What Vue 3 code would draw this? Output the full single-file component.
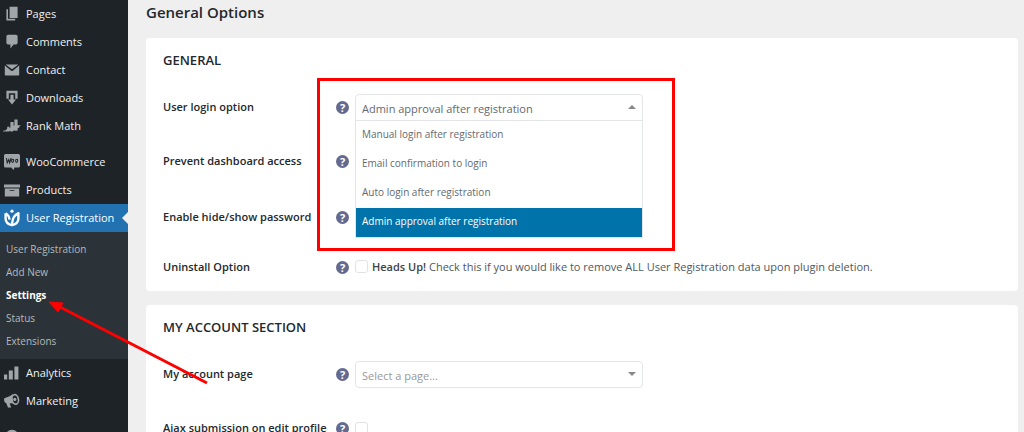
<script setup>
import { ref } from 'vue'

const topItems = [
  { label: 'Pages', icon: 'pages' },
  { label: 'Comments', icon: 'comments' },
  { label: 'Contact', icon: 'contact' },
  { label: 'Downloads', icon: 'downloads' },
  { label: 'Rank Math', icon: 'rank' },
  { label: 'WooCommerce', icon: 'woo', gap: true },
  { label: 'Products', icon: 'products' },
  { label: 'User Registration', icon: 'user', current: true }
]
const subItems = ['User Registration', 'Add New', 'Settings', 'Status', 'Extensions']
const bottomItems = [
  { label: 'Analytics', icon: 'analytics' },
  { label: 'Marketing', icon: 'marketing' },
  { label: '', icon: 'more', gap: true }
]
const icons = {
  pages: 'M7 15V1h10v14zM5 16h9v2H3V4h2z',
  comments: 'M5 1h10q2 0 2 2v8q0 2-2 2h-3l-4 5v-5H5q-2 0-2-2V3q0-2 2-2z',
  contact: 'M1 4.500L9 11q1 .8 2 0l8-6.500V16q0 1-1 1H2q-1 0-1-1zM2 3h16l-8 6z',
  downloads: 'M3 1h14v10h-3V4H6v7H3zM8 6h4v6h3l-5 6-5-6h3z',
  rank: 'M-1 16q4 0 5-3v-2h3v2l1-1V5h4v5l1-1V2h4v7h4q-2 1-2 3l-2 1v3h-4v-1l-2 2H8v-1l-2 1H-1z',
  products: 'M0 3h20v4H0zM1 8h18v10H1zM7 10v1h6v-1z',
  analytics: 'M0 12h4v6H0zm6-5h5v11H6zm7-5h5v16h-5z',
  more: 'M10 1a9 9 0 110 18 9 9 0 010-18z'
}
const loginOptions = [
  'Manual login after registration',
  'Email confirmation to login',
  'Auto login after registration',
  'Admin approval after registration'
]
const login = ref('Admin approval after registration')
const accountPage = ref('')
</script>

<template>
  <div class="shell">
    <nav class="sidebar" aria-label="Admin menu">
      <template v-for="group in [topItems, bottomItems]" :key="group[0].label">
        <a
          v-for="item in group"
          :key="item.icon"
          href="#"
          class="item"
          :class="{ current: item.current, spaced: item.gap }"
        >
          <svg class="icon" viewBox="0 0 20 20" aria-hidden="true">
            <g v-if="item.icon === 'woo'">
              <path d="M2 0h16q2 0 2 2v13q0 2-2 2h-5l-1 3-3-3H2q-2 0-2-2V2q0-2 2-2z" />
              <path class="ink" d="M3 5l1 6 2-4 1 4 2-6M11 6.500q-1.500 0-1.500 2t1.200 2 1.400-2-1.100-2zm5 0q-1.500 0-1.500 2t1.200 2 1.400-2-1.100-2z" />
            </g>
            <g v-else-if="item.icon === 'marketing'">
              <path d="M0 8q0-2 2-2 6-1 9-5-2 7 2 13-3-2-6-1l2 5H5l-2-5Q0 12 0 8z" />
              <ellipse class="ring" cx="14" cy="8" rx="4" ry="6" transform="rotate(-12 14 8)" />
              <circle cx="13.500" cy="8" r="2" />
            </g>
            <g v-else-if="item.icon === 'user'">
              <circle cx="10" cy="1.500" r="2" />
              <path class="leaf" d="M2 4v7q0 6 8 8 8-2 8-8V4q-7 3-8 13M2 4q4 2 5 8" />
            </g>
            <path v-else fill-rule="evenodd" :d="icons[item.icon]" />
          </svg>
          <span>{{ item.label }}</span>
        </a>
        <div v-if="group === topItems" class="submenu">
          <a v-for="sub in subItems" :key="sub" href="#" :class="{ active: sub === 'Settings' }">{{ sub }}</a>
        </div>
      </template>
    </nav>

    <main class="content">
      <h1>General Options</h1>

      <section class="card">
        <h2>GENERAL</h2>
        <div class="row">
          <label for="login">User login option</label>
          <button type="button" class="help" aria-label="Help: login option">?</button>
          <div class="picker open">
            <select id="login" v-model="login">
              <option v-for="o in loginOptions" :key="o">{{ o }}</option>
            </select>
            <ul class="menu">
              <li v-for="o in loginOptions" :key="o">
                <button type="button" :class="{ chosen: o === login }" @click="login = o">{{ o }}</button>
              </li>
            </ul>
          </div>
        </div>
        <div class="row tall">
          <label for="prevent">Prevent dashboard access</label>
          <button type="button" class="help" aria-label="Help: dashboard access">?</button>
          <input id="prevent" type="checkbox" />
        </div>
        <div class="row tall">
          <label for="hide">Enable hide/show password</label>
          <button type="button" class="help" aria-label="Help: password visibility">?</button>
          <input id="hide" type="checkbox" />
        </div>
        <div class="row short">
          <label for="uninstall">Uninstall Option</label>
          <button type="button" class="help" aria-label="Help: uninstall">?</button>
          <div class="check">
            <input id="uninstall" type="checkbox" />
            <span><strong>Heads Up!</strong> Check this if you would like to remove ALL User Registration data upon plugin deletion.</span>
          </div>
        </div>
      </section>

      <section class="card">
        <h2>MY ACCOUNT SECTION</h2>
        <div class="row">
          <label for="page">My account page</label>
          <button type="button" class="help" aria-label="Help: account page">?</button>
          <div class="picker">
            <select id="page" v-model="accountPage" class="empty">
              <option value="">Select a page...</option>
            </select>
          </div>
        </div>
        <div class="row tall">
          <label for="ajax">Ajax submission on edit profile</label>
          <button type="button" class="help" aria-label="Help: ajax submission">?</button>
          <input id="ajax" type="checkbox" />
        </div>
      </section>
    </main>

    <svg class="marks" width="680" height="400" aria-hidden="true">
      <rect x="318.500" y="79.500" width="355" height="170" />
      <path d="M207 383L60 307" />
      <path class="head" d="M49 302l14 1-5 9z" />
    </svg>
  </div>
</template>

<style>
body {
  margin: 0;
  background: #efefef;
}
</style>

<style scoped>
.shell {
  position: relative;
  display: flex;
  height: 100vh;
  overflow: hidden;
  font-family: "Open Sans", "Noto Sans", sans-serif;
  font-size: 11px;
  color: #23282d;
}
.shell * {
  box-sizing: border-box;
}
.sidebar {
  display: flex;
  flex-direction: column;
  flex: 0 0 128px;
  background: #1d2327;
}
.item {
  position: relative;
  display: flex;
  flex: 0 0 28px;
  align-items: center;
  gap: 6px;
  padding-left: 4px;
  color: #f0f0f1;
  text-decoration: none;
  white-space: nowrap;
}
.item span {
  padding-bottom: 2px;
}
.spaced {
  margin-top: 8px;
}
.icon {
  flex: none;
  width: 16px;
  height: 16px;
  overflow: visible;
  fill: #a0a5aa;
}
.ink {
  fill: none;
  stroke: #1d2327;
  stroke-width: 1.3;
}
.ring {
  fill: none;
  stroke: #a0a5aa;
  stroke-width: 2;
}
.leaf {
  fill: none;
  stroke: #fff;
  stroke-width: 3;
  stroke-linejoin: round;
}
.current {
  background: #2271b1;
  color: #fff;
}
.current .icon {
  fill: #fff;
}
.current::after {
  content: "";
  position: absolute;
  right: 0;
  top: 8px;
  border: 6px solid transparent;
  border-left: 0;
  border-right-color: #efefef;
}
.submenu {
  flex: none;
  padding: 6px 0;
  background: #2c3338;
}
.submenu a {
  display: block;
  padding-left: 6px;
  font-size: 10px;
  line-height: 23px;
  color: #b4b9be;
  text-decoration: none;
}
.submenu .active {
  color: #fff;
  font-weight: 700;
}
.content {
  flex: 1;
  min-width: 0;
  padding: 0 6px 0 18px;
}
h1 {
  margin: 0;
  height: 38px;
  line-height: 24px;
  font-size: 15px;
  font-weight: 600;
}
.card {
  margin-bottom: 14px;
  padding: 0 17px 2px;
  background: #fff;
  border-radius: 4px;
}
h2 {
  margin: 0;
  height: 43px;
  line-height: 44px;
  font-size: 13px;
  font-weight: 600;
}
.row {
  display: grid;
  grid-template-columns: 167px 13px 1fr;
  column-gap: 6px;
  align-items: center;
  height: 52px;
}
.row.tall {
  height: 56px;
}
.row.short {
  height: 44px;
}
label {
  padding-bottom: 2px;
  font-weight: 600;
  white-space: nowrap;
}
.help {
  width: 13px;
  height: 13px;
  padding: 0;
  border: 0;
  border-radius: 50%;
  background: #646a8f;
  color: #fff;
  font: 700 11px/13px "Open Sans", sans-serif;
}
input[type="checkbox"] {
  appearance: none;
  flex: none;
  width: 13px;
  height: 13px;
  margin: 0;
  border: 1px solid #e1e1e6;
  border-radius: 3px;
  background: #fff;
}
.check {
  display: flex;
  align-items: center;
  gap: 4px;
  padding-bottom: 2px;
  color: #50575e;
  white-space: nowrap;
}
strong {
  font-weight: 600;
  color: #3c434a;
}
.picker {
  position: relative;
  width: 288px;
}
.picker::after {
  content: "";
  position: absolute;
  right: 7px;
  top: 11px;
  border: 4px solid transparent;
  border-top-color: #888;
  border-bottom: 0;
}
.picker.open::after {
  border-top: 0;
  border-bottom: 4px solid #888;
}
select {
  appearance: none;
  display: block;
  width: 100%;
  height: 27px;
  padding: 2px 6px 0;
  border: 1px solid #e4e5e8;
  border-radius: 4px;
  background: #fff;
  font: 11px "Open Sans", sans-serif;
  color: #646970;
}
.open select {
  border-radius: 4px 4px 0 0;
}
select.empty {
  color: #999;
}
.menu {
  position: absolute;
  z-index: 1;
  top: 26px;
  left: 0;
  right: 0;
  margin: 0;
  padding: 0;
  list-style: none;
  border: 1px solid #e4e5e8;
  background: #fff;
}
.menu button {
  display: block;
  width: 100%;
  height: 29px;
  padding: 0 6px 2px;
  border: 0;
  background: #fff;
  color: #646970;
  font: 10px "Open Sans", sans-serif;
  text-align: left;
}
.menu .chosen {
  background: #0073aa;
  color: #fff;
}
.marks {
  position: absolute;
  z-index: 2;
  top: 0;
  left: 0;
  fill: none;
  stroke: #fe0000;
  stroke-width: 3;
  pointer-events: none;
}
.marks .head {
  fill: #fe0000;
  stroke-width: 1;
}
</style>
